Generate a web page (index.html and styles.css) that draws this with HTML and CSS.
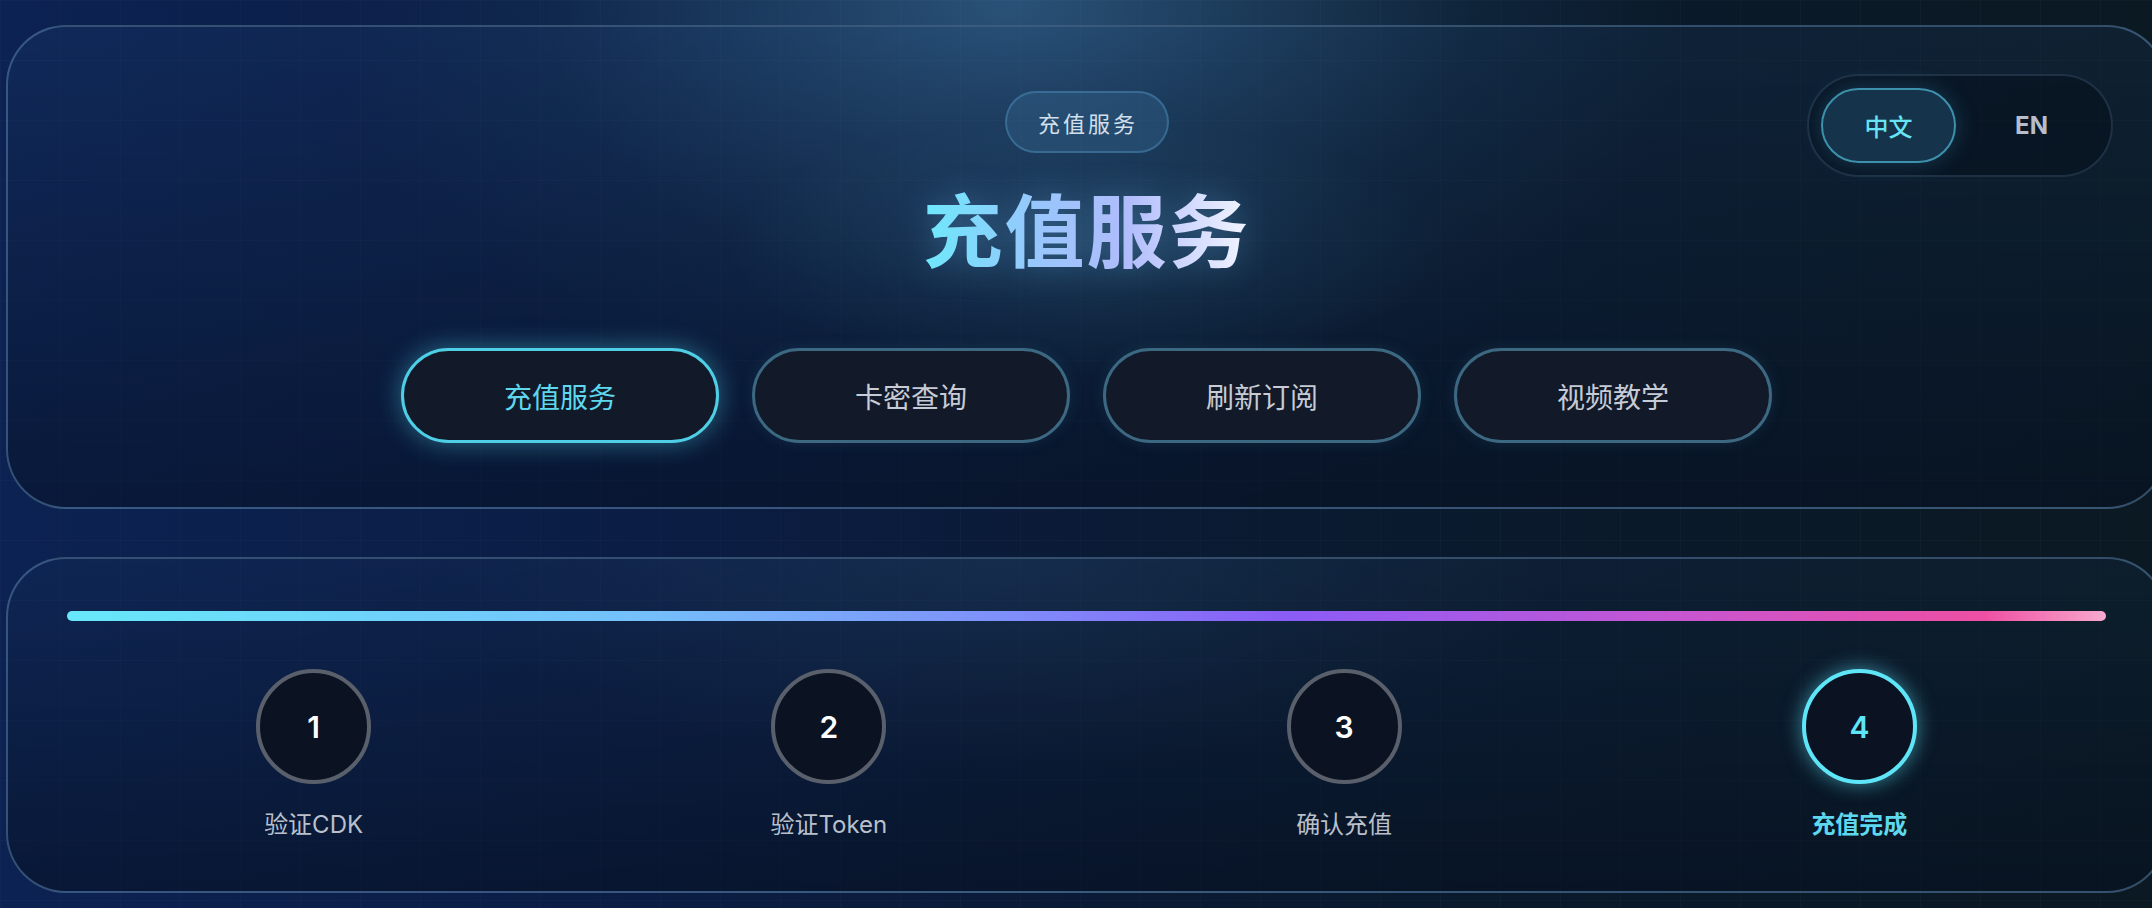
FILE: index.html
```html
<!DOCTYPE html>
<html lang="zh-CN">
<head>
<meta charset="UTF-8">
<meta name="viewport" content="width=device-width, initial-scale=1.0">
<title>充值服务</title>
<link rel="stylesheet" href="styles.css">
</head>
<body>
<main class="page">
  <section class="card hero">
    <div class="lang-switch">
      <button type="button" class="lang-btn lang-active">中文</button>
      <button type="button" class="lang-btn">EN</button>
    </div>
    <span class="badge">充值服务</span>
    <h1 class="title">充值服务</h1>
    <nav class="tabs">
      <button type="button" class="tab tab-active">充值服务</button>
      <button type="button" class="tab">卡密查询</button>
      <button type="button" class="tab">刷新订阅</button>
      <button type="button" class="tab">视频教学</button>
    </nav>
  </section>

  <section class="card steps-card">
    <div class="progress"></div>
    <ol class="steps">
      <li class="step">
        <span class="step-num">1</span>
        <span class="step-label">验证CDK</span>
      </li>
      <li class="step">
        <span class="step-num">2</span>
        <span class="step-label">验证Token</span>
      </li>
      <li class="step">
        <span class="step-num">3</span>
        <span class="step-label">确认充值</span>
      </li>
      <li class="step step-active">
        <span class="step-num">4</span>
        <span class="step-label">充值完成</span>
      </li>
    </ol>
  </section>
</main>
</body>
</html>
```

FILE: styles.css
```css
html,
body {
  margin: 0;
  padding: 0;
  height: 100%;
  overflow: hidden;
}

body {
  font-family: Inter, "Noto Sans CJK SC", sans-serif;
  color: #c6cbd6;
  background-color: #0a1828;
  background-image:
    linear-gradient(rgba(255, 255, 255, 0.018) 1px, transparent 1px),
    linear-gradient(90deg, rgba(255, 255, 255, 0.018) 1px, transparent 1px),
    radial-gradient(ellipse 850px 560px at 1010px 0, rgba(52, 100, 140, 0.75), rgba(30, 70, 100, 0.22) 55%, transparent 80%),
    linear-gradient(90deg, #0c2252 0%, #0b1d44 30%, #0a1a30 60%, #0a1922 100%);
  background-size: 60px 60px, 60px 60px, auto, auto;
}

.page {
  width: 2161px;
  margin-left: 6px;
  padding-top: 25px;
  display: flex;
  flex-direction: column;
  gap: 48px;
}

.card {
  position: relative;
  border: 2px solid rgba(95, 135, 175, 0.5);
  border-radius: 60px;
  background: linear-gradient(180deg, rgba(40, 80, 130, 0.16) 0%, rgba(8, 20, 40, 0.45) 100%);
  box-sizing: border-box;
}

/* hero */

.hero {
  padding: 64px 0 64px;
  display: flex;
  flex-direction: column;
  align-items: center;
  background:
    radial-gradient(ellipse 480px 170px at 50% 46%, rgba(70, 150, 190, 0.16), transparent 75%),
    linear-gradient(180deg, rgba(40, 80, 130, 0.16) 0%, rgba(6, 16, 34, 0.5) 100%);
}

.badge {
  display: inline-flex;
  align-items: center;
  justify-content: center;
  box-sizing: border-box;
  width: 164px;
  height: 62px;
  padding-left: 3px;
  border: 2px solid rgba(80, 145, 190, 0.45);
  border-radius: 31px;
  background: rgba(55, 105, 145, 0.35);
  color: #d2e0ee;
  font-size: 22px;
  letter-spacing: 3px;
}

.title {
  margin: 30px 0 0;
  font-size: 80px;
  line-height: 98px;
  font-weight: 700;
  letter-spacing: 2px;
  background: linear-gradient(90deg, #6ee8fb 0%, #98c6fc 35%, #b0bcfc 62%, #f3f6ff 100%);
  -webkit-background-clip: text;
  background-clip: text;
  color: transparent;
  filter: drop-shadow(0 0 16px rgba(120, 190, 250, 0.3));
}

.tabs {
  display: flex;
  gap: 33px;
  margin-top: 67px;
}

.tab {
  width: 318px;
  height: 95px;
  border: 3px solid #3c6882;
  border-radius: 48px;
  background: #121a29;
  color: #c6cbd6;
  font-family: Inter, "Noto Sans CJK SC", sans-serif;
  font-size: 28px;
  box-shadow: 0 0 14px rgba(40, 90, 120, 0.25);
}

.tab-active {
  border-color: #4fcfe6;
  color: #5ed8ee;
  box-shadow: 0 0 26px rgba(79, 207, 230, 0.45);
}

.lang-switch {
  position: absolute;
  top: 47px;
  right: 52px;
  display: flex;
  gap: 8px;
  padding: 12px;
  border: 2px solid rgba(110, 145, 185, 0.22);
  border-radius: 52px;
  background: rgba(6, 14, 28, 0.55);
}

.lang-btn {
  width: 135px;
  height: 75px;
  border: 2px solid transparent;
  border-radius: 38px;
  background: transparent;
  color: #b7bdca;
  font-family: Inter, "Noto Sans CJK SC", sans-serif;
  font-size: 24px;
  font-weight: 700;
}

.lang-active {
  border-color: #3d91ad;
  background: #15334a;
  color: #67e3f5;
  font-weight: 500;
  box-shadow: 0 0 22px rgba(60, 150, 190, 0.3);
}

/* steps */

.steps-card {
  padding: 52px 48px 49px;
  background:
    radial-gradient(ellipse 700px 260px at 46% 0, rgba(50, 90, 125, 0.22), transparent 80%),
    linear-gradient(180deg, rgba(30, 60, 100, 0.16) 0%, rgba(6, 16, 32, 0.55) 100%);
}

.progress {
  height: 10px;
  margin: 0 11px;
  border-radius: 5px;
  background: linear-gradient(90deg, #67e8f9 0%, #74c0fb 28%, #7f8ffa 46%, #8b5cf6 60%, #c456d4 78%, #ee4fa3 94%, #f7a9cc 100%);
}

.steps {
  list-style: none;
  margin: 48px 0 0;
  padding: 0;
  display: grid;
  grid-template-columns: repeat(4, 1fr);
}

.step {
  display: flex;
  flex-direction: column;
  align-items: center;
}

.step-num {
  display: flex;
  align-items: center;
  justify-content: center;
  box-sizing: border-box;
  width: 115px;
  height: 115px;
  border: 4px solid #5a606b;
  border-radius: 50%;
  background: #0b1322;
  color: #fff;
  font-size: 30px;
  font-weight: 600;
}

.step-label {
  margin-top: 24px;
  font-size: 24px;
  line-height: 34px;
  color: #b9c0cc;
}

.step-active .step-num {
  border-color: #5ee5f7;
  color: #5ee5f7;
  box-shadow: 0 0 20px rgba(94, 229, 247, 0.55);
}

.step-active .step-label {
  color: #5ed8ee;
  font-weight: 700;
}
```
